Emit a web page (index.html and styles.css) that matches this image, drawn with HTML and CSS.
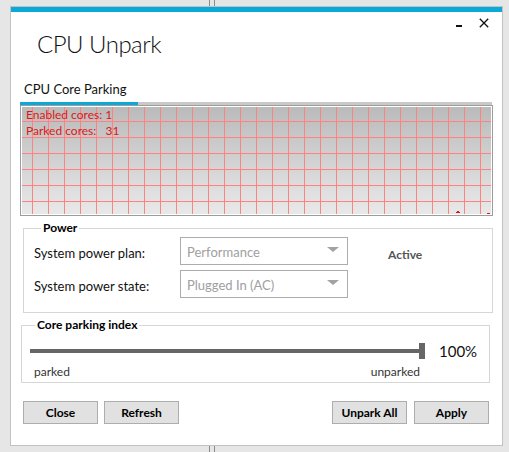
FILE: index.html
```html
<!DOCTYPE html>
<html>
<head>
<meta charset="utf-8">
<link rel="stylesheet" href="styles.css">
</head>
<body>
<div class="window">
  <div class="accent"></div>
  <div class="titlebar">
    <span class="min-btn"></span>
    <svg class="close-btn" width="10" height="10" viewBox="0 0 10 10"><path d="M0.8 0.8 L9.2 9.2 M9.2 0.8 L0.8 9.2" stroke="#111" stroke-width="1.3" fill="none"/></svg>
  </div>
  <h1 class="title">CPU Unpark</h1>
  <div class="content">
    <div class="tabs"><span class="tab">CPU Core Parking</span></div>
    <div class="tabline"><span class="tabline-active"></span></div>
    <div class="graph">
      <div class="graph-text">Enabled cores: 1</div>
      <div class="graph-text">Parked cores:&nbsp;&nbsp; 31</div>
      <span class="point point-a"></span>
      <span class="point point-b"></span>
    </div>
    <fieldset class="group power">
      <legend class="group-label">Power</legend>
      <div class="power-grid">
        <span class="field-label">System power plan:</span>
        <div class="combo"><span>Performance</span><svg class="arrow" width="12" height="6" viewBox="0 0 12 6"><path d="M0 0 H12 L6 5 Z" fill="#a2a2a2"/></svg></div>
        <span class="status">Active</span>
        <span class="field-label">System power state:</span>
        <div class="combo"><span>Plugged In (AC)</span><svg class="arrow" width="12" height="6" viewBox="0 0 12 6"><path d="M0 0 H12 L6 5 Z" fill="#a2a2a2"/></svg></div>
      </div>
    </fieldset>
    <fieldset class="group core">
      <legend class="group-label core-label">Core parking index</legend>
      <div class="slider-row">
        <div class="slider">
          <div class="track"></div>
          <div class="thumb"></div>
        </div>
        <span class="percent">100%</span>
      </div>
      <div class="slider-labels">
        <span>parked</span>
        <span>unparked</span>
      </div>
    </fieldset>
    <div class="buttons">
      <div class="btn-group left">
        <button class="btn">Close</button>
        <button class="btn">Refresh</button>
      </div>
      <div class="btn-group right">
        <button class="btn">Unpark All</button>
        <button class="btn">Apply</button>
      </div>
    </div>
  </div>
</div>
</body>
</html>
```

FILE: styles.css
```css
html, body {
  margin: 0;
  padding: 0;
}
body {
  width: 509px;
  height: 452px;
  overflow: hidden;
  font-family: Lato, "Open Sans", sans-serif;
  background:
    linear-gradient(#8c8c8c, #8c8c8c) 209px 0 / 1px 100% no-repeat,
    linear-gradient(#8c8c8c, #8c8c8c) 214px 0 / 1px 100% no-repeat,
    #e6e6e6;
  padding-top: 6px;
  padding-left: 10px;
  box-sizing: border-box;
}
.window {
  box-sizing: border-box;
  width: 493px;
  height: 440px;
  border: 1px solid #c2c2c2;
  background: #fff;
  display: flex;
  flex-direction: column;
}
.accent {
  height: 5px;
  background: #0aa9d7;
}
.titlebar {
  height: 16px;
  box-sizing: border-box;
  padding-top: 6px;
  padding-right: 13px;
  display: flex;
  justify-content: flex-end;
  align-items: flex-start;
}
.min-btn {
  width: 6px;
  height: 2px;
  background: #111;
  margin-top: 7px;
  margin-right: 17px;
}
.close-btn {
  display: block;
}
.title {
  margin: 1px 0 0 26px;
  font-size: 24px;
  line-height: 30px;
  font-weight: 300;
  letter-spacing: -0.5px;
  color: #111;
}
.content {
  padding-left: 9px;
}
.tabs {
  margin-top: 19px;
  height: 18px;
}
.tab {
  display: inline-block;
  padding-left: 4px;
  font-size: 13px;
  line-height: 18px;
  color: #111;
}
.tabline {
  margin-top: 6px;
  width: 472px;
  height: 3px;
  background: #c9c9c9;
  display: flex;
}
.tabline-active {
  width: 118px;
  background: #0aa9d7;
}
.graph {
  position: relative;
  box-sizing: border-box;
  width: 473px;
  height: 111px;
  border: 1px solid #9c9c9c;
  box-shadow: inset 0 0 0 1px #fff;
  padding: 1px 0 0 5px;
  background-image:
    linear-gradient(to right, #ff8181 1px, transparent 1px),
    linear-gradient(to bottom, #ff8181 1px, transparent 1px),
    linear-gradient(#bababa, #e9e9e9);
  background-size: 16px 16px, 16px 16px, 100% 100%;
  background-position: 11px 0, 0 15px, 0 0;
}
.graph-text {
  font-size: 12px;
  line-height: 16px;
  color: #e01515;
}
.point {
  position: absolute;
  background: #e01515;
  height: 1px;
}
.point-a {
  left: 435px;
  top: 106px;
  width: 4px;
}
.point-a::before {
  content: "";
  position: absolute;
  left: 1px;
  top: -1px;
  width: 2px;
  height: 1px;
  background: #e01515;
}
.point-b {
  left: 466px;
  top: 107px;
  width: 3px;
}
.group {
  margin: 0;
  padding: 0;
  border: 1px solid #d6d6d6;
  min-width: 0;
}
.group-label {
  margin-left: 7px;
  padding: 0 2px;
  font-size: 12px;
  line-height: 14px;
  font-weight: 700;
  color: #000;
}
.power {
  margin-top: 5px;
  margin-left: 3px;
  width: 470px;
  box-sizing: border-box;
  padding: 2px 0 14px 10px;
}
.power-grid {
  display: grid;
  grid-template-columns: 146px 168px auto;
  grid-auto-rows: 28px;
  row-gap: 5px;
  column-gap: 0;
  align-items: center;
}
.field-label {
  font-size: 13px;
  color: #111;
  padding-top: 4px;
}
.combo {
  box-sizing: border-box;
  height: 28px;
  border: 1px solid #acacac;
  background: #fff;
  display: flex;
  align-items: center;
  justify-content: space-between;
  padding: 0 8px 0 6px;
  font-size: 13px;
  color: #a0a0a0;
}
.combo span {
  padding-top: 1px;
}
.arrow {
  display: block;
  margin-top: -3px;
}
.status {
  margin-left: 40px;
  padding-top: 7px;
  font-size: 12px;
  font-weight: 700;
  color: #555;
}
.core {
  margin-top: 5px;
  margin-left: 1px;
  width: 469px;
  box-sizing: border-box;
  padding: 11px 0 3px 8px;
}
.core-label {
  margin-left: 5px;
}
.slider-row {
  display: flex;
  align-items: center;
}
.slider {
  display: flex;
  align-items: center;
  width: 395px;
}
.track {
  width: 389px;
  height: 4px;
  background: #666;
}
.thumb {
  width: 6px;
  height: 16px;
  background: #666;
}
.percent {
  margin-left: 14px;
  font-size: 15px;
  line-height: 16px;
  color: #111;
}
.slider-labels {
  width: 395px;
  margin-top: 6px;
  display: flex;
  justify-content: space-between;
  font-size: 12px;
  line-height: 14px;
  color: #333;
}
.slider-labels span:first-child {
  padding-left: 4px;
}
.slider-labels span:last-child {
  padding-right: 5px;
}
.buttons {
  margin-top: 18px;
  margin-left: 3px;
  width: 466px;
  display: flex;
  justify-content: space-between;
}
.btn-group {
  display: flex;
}
.btn-group.left {
  gap: 6px;
}
.btn-group.right {
  gap: 7px;
}
.btn {
  width: 75px;
  height: 23px;
  margin: 0;
  padding: 0;
  border: 1px solid #adadad;
  background: #e1e1e1;
  font-family: Lato, "Open Sans", sans-serif;
  font-size: 12px;
  font-weight: 700;
  color: #000;
}
```
